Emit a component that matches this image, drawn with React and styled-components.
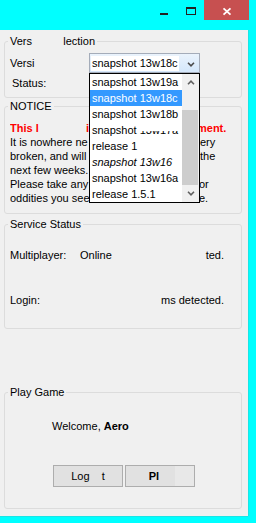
import styled, { createGlobalStyle } from "styled-components";

const GlobalStyle = createGlobalStyle`
  html, body { margin: 0; padding: 0; }
  body {
    background: #00ffff;
    font-family: "Liberation Sans", Arial, sans-serif;
    font-size: 11px;
    color: #000;
  }
`;

const Window = styled.div`
  width: 256px;
  height: 523px;
  display: flex;
  flex-direction: column;
  background: #00ffff;
  overflow: hidden;
`;

const TitleBar = styled.div`
  height: 30px;
  flex: none;
  display: flex;
  justify-content: flex-end;
  align-items: flex-start;
  padding-right: 7px;
`;

const CaptionButton = styled.div`
  width: ${(p) => p.$w}px;
  height: 20px;
  background: ${(p) => p.$bg || "transparent"};
  svg { display: block; }
`;

const Client = styled.main`
  flex: 1;
  margin: 0 8px 7px 0;
  background: #f0f0f0;
  padding: 5px 0 0 4px;
  display: flex;
  flex-direction: column;
  box-sizing: border-box;
  box-shadow: 1px 0 0 #19e6e6, 0 1px 0 #19e6e6;
`;

const Group = styled.fieldset`
  box-sizing: border-box;
  width: 238px;
  margin: ${(p) => p.$mt || 0}px 0 0;
  padding: ${(p) => p.$pad};
  border: 1px solid #dcdcdc;
  border-radius: 3px;
  min-width: 0;
`;

const Legend = styled.legend`
  margin-left: -2px;
  padding: 0 2px;
  line-height: 13px;
`;

// parts of the text the window never repainted
const Hole = styled.span`
  visibility: hidden;
`;

const FieldRow = styled.div`
  display: flex;
  align-items: center;
  height: 20px;
`;

const FieldLabel = styled.span`
  width: 79px;
  flex: none;
`;

const StatusLine = styled.div`
  margin-top: 2px;
  height: 16px;
  padding-left: 2px;
  display: flex;
  align-items: center;
`;

const ComboWrap = styled.div`
  position: relative;
  width: 111px;
  height: 20px;
`;

const Combo = styled.div`
  box-sizing: border-box;
  height: 20px;
  border: 1px solid #a4acb9;
  background: linear-gradient(#eaf3fc, #d4e7fb);
  display: flex;
  align-items: center;
  padding-left: 1px;
`;

const ComboText = styled.span`
  background: #fff;
  padding: 0 1px;
  line-height: 15px;
`;

const ComboArrow = styled.span`
  margin-left: auto;
  width: 17px;
  display: flex;
  justify-content: center;
  padding-top: 2px;
`;

const DropList = styled.div`
  position: absolute;
  top: 100%;
  left: 0;
  width: 111px;
  box-sizing: border-box;
  border: 1px solid #000;
  background: #fff;
  display: flex;
  z-index: 2;
`;

const Items = styled.ul`
  list-style: none;
  margin: 0;
  padding: 0;
  width: 92px;
`;

const Item = styled.li`
  height: 16px;
  line-height: 16px;
  padding-left: 2px;
  white-space: nowrap;
  overflow: hidden;
  background: ${(p) => (p.$active ? "#3399ff" : "transparent")};
  color: ${(p) => (p.$active ? "#fff" : "#000")};
  font-style: ${(p) => (p.$italic ? "italic" : "normal")};
`;

const Torn = styled.span`
  position: relative;
  &::after {
    content: "";
    position: absolute;
    left: 0;
    right: 0;
    top: 0;
    height: 7px;
    background: #fff;
  }
`;

const Scrollbar = styled.div`
  width: 17px;
  display: flex;
  flex-direction: column;
  background: #f0f0f0;
`;

const ScrollButton = styled.div`
  height: 17px;
  display: flex;
  align-items: center;
  justify-content: center;
`;

const Track = styled.div`
  flex: 1;
  display: flex;
  flex-direction: column;
  justify-content: flex-end;
  padding: 0 1px 0 0;
`;

const Thumb = styled.div`
  height: 75px;
  background: #cdcdcd;
`;

const NoticeLine = styled.div`
  display: grid;
  grid-template-columns: 79px 110px 1fr;
  line-height: 14px;
  white-space: nowrap;
  color: ${(p) => (p.$red ? "#ff0000" : "inherit")};
  font-weight: ${(p) => (p.$red ? 700 : 400)};
`;

const Cell = styled.span`
  display: flex;
  justify-content: space-between;
  overflow: hidden;
  margin-left: ${(p) => p.$shift || 0}px;
`;

const ServiceRow = styled.div`
  display: grid;
  grid-template-columns: 70px auto 1fr;
  line-height: 14px;
  white-space: nowrap;
  margin-top: ${(p) => p.$mt || 0}px;
`;

const Tail = styled.span`
  text-align: right;
`;

const Welcome = styled.div`
  margin-left: 42px;
  line-height: 14px;
`;

const ButtonRow = styled.div`
  display: flex;
  gap: 2px;
  margin: 32px 0 0 43px;
`;

const Button = styled.button`
  width: 70px;
  height: 22px;
  box-sizing: border-box;
  padding: 0;
  border: 1px solid #adadad;
  background: ${(p) =>
    p.$bold ? "linear-gradient(90deg, #e1e1e1 72%, #e8e8e8 72%)" : "#e1e1e1"};
  font: inherit;
  font-weight: ${(p) => (p.$bold ? 700 : 400)};
  color: #000;
`;

const Chevron = ({ up, color = "#606060" }) => (
  <svg width="8" height="5" viewBox="0 0 8 5">
    <polyline
      points={up ? "1,4.2 4,1.2 7,4.2" : "1,0.8 4,3.8 7,0.8"}
      fill="none"
      stroke={color}
      strokeWidth="1.6"
    />
  </svg>
);

const versions = [
  { name: "snapshot 13w19a" },
  { name: "snapshot 13w18c", active: true },
  { name: "snapshot 13w18b" },
  { name: "snapshot ", torn: "13w17a" },
  { name: "release 1" },
  { name: "snapshot 13w16", italic: true },
  { name: "snapshot 13w16a" },
  { name: "release 1.5.1" },
];

// left part and right part of each line; the middle sits under the open list
const notice = [
  ["It is nowhere ne", "ery"],
  ["broken, and will", "the"],
  ["next few weeks.", ""],
  ["Please take any", " or"],
  ["oddities you see", " e."],
];

export default function App() {
  return (
    <Window>
      <GlobalStyle />
      <TitleBar>
        <CaptionButton $w={26}>
          <svg width="26" height="20">
            <rect x="9" y="13" width="8" height="2" fill="#222" />
          </svg>
        </CaptionButton>
        <CaptionButton $w={27}>
          <svg width="27" height="20">
            <rect x="9.5" y="7.5" width="9" height="7" fill="none" stroke="#222" />
            <rect x="9" y="7" width="10" height="2" fill="#222" />
          </svg>
        </CaptionButton>
        <CaptionButton $w={45} $bg="#c75050">
          <svg width="45" height="20">
            <path d="M19.5 8.3 L26.5 14.7 M26.5 8.3 L19.5 14.7" stroke="#fff" strokeWidth="1.8" />
          </svg>
        </CaptionButton>
      </TitleBar>

      <Client>
        <Group $pad="5px 5px 6px 5px">
          <Legend>
            Vers<Hole>ion Se</Hole>lection
          </Legend>
          <FieldRow>
            <FieldLabel>Versi</FieldLabel>
            <ComboWrap>
              <Combo>
                <ComboText>snapshot 13w18c</ComboText>
                <ComboArrow>
                  <Chevron color="#4a4a4a" />
                </ComboArrow>
              </Combo>
              <DropList>
                <Items>
                  {versions.map((v) => (
                    <Item key={v.name + (v.torn || "")} $active={v.active} $italic={v.italic}>
                      {v.name}
                      {v.torn && <Torn>{v.torn}</Torn>}
                    </Item>
                  ))}
                </Items>
                <Scrollbar>
                  <ScrollButton>
                    <Chevron up />
                  </ScrollButton>
                  <Track>
                    <Thumb />
                  </Track>
                  <ScrollButton>
                    <Chevron />
                  </ScrollButton>
                </Scrollbar>
              </DropList>
            </ComboWrap>
          </FieldRow>
          <StatusLine>Status:</StatusLine>
        </Group>

        <Group $mt={2} $pad="8px 5px 8px 5px">
          <Legend>NOTICE</Legend>
          <NoticeLine $red>
            <Cell>
              <span>This l</span>
              <span>i</span>
            </Cell>
            <span />
            <Cell $shift={-2}>ment.</Cell>
          </NoticeLine>
          {notice.map(([a, c]) => (
            <NoticeLine key={a}>
              <Cell>{a}</Cell>
              <span />
              <Cell $shift={c.startsWith(" ") ? 0 : 1}>{c}</Cell>
            </NoticeLine>
          ))}
        </Group>

        <Group $mt={4} $pad="17px 17px 21px 5px">
          <Legend>Service Status</Legend>
          <ServiceRow>
            <span>Multiplayer:</span>
            <span>Online</span>
            <Tail>ted.</Tail>
          </ServiceRow>
          <ServiceRow $mt={31}>
            <span>Login:</span>
            <span />
            <Tail>ms detected.</Tail>
          </ServiceRow>
        </Group>

        <Group $mt={57} $pad="20px 5px 21px 5px">
          <Legend>Play Game</Legend>
          <Welcome>
            Welcome, <b>Aero</b>
          </Welcome>
          <ButtonRow>
            <Button>
              Log<Hole>ou</Hole>t
            </Button>
            <Button $bold>
              Pl<Hole>ay</Hole>
            </Button>
          </ButtonRow>
        </Group>
      </Client>
    </Window>
  );
}
